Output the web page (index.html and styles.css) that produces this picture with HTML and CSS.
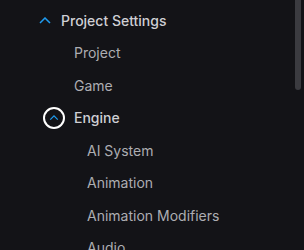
FILE: index.html
```html
<!DOCTYPE html>
<html lang="en">
<head>
    <meta charset="UTF-8">
    <meta name="viewport" content="width=device-width, initial-scale=1.0">
    <title>Settings tree</title>
    <link rel="stylesheet" href="styles.css">
</head>
<body>
    <div class="panel">
        <ul class="tree">
            <li class="row lvl-0 branch">
                <span class="toggle"><svg viewBox="0 0 12 7"><path d="M1 6 L6 1 L11 6"/></svg></span>
                <span class="label">Project Settings</span>
            </li>
            <li class="row lvl-1"><span class="toggle"></span><span class="label">Project</span></li>
            <li class="row lvl-1"><span class="toggle"></span><span class="label">Game</span></li>
            <li class="row lvl-1 branch">
                <span class="toggle focused"><svg viewBox="0 0 12 7"><path d="M1.5 5.5 L6 1 L10.5 5.5"/></svg></span>
                <span class="label">Engine</span>
            </li>
            <li class="row lvl-2"><span class="toggle"></span><span class="label">AI System</span></li>
            <li class="row lvl-2"><span class="toggle"></span><span class="label">Animation</span></li>
            <li class="row lvl-2"><span class="toggle"></span><span class="label">Animation Modifiers</span></li>
            <li class="row lvl-2"><span class="toggle"></span><span class="label">Audio</span></li>
        </ul>
        <div class="scroll-thumb"></div>
    </div>
</body>
</html>
```

FILE: styles.css
```css
html, body {
    margin: 0;
    padding: 0;
    background-color: #131317;
    overflow: hidden;
}
.panel {
    position: relative;
    width: 304px;
    height: 250px;
    overflow: hidden;
    font-family: Inter, "Noto Sans", sans-serif;
    font-size: 14px;
}
.tree {
    list-style: none;
    margin: 0;
    padding: 3.75px 0 0 0;
}
.row {
    display: flex;
    align-items: center;
    height: 32.5px;
    color: #adadb2;
}
.lvl-0 { padding-left: 34px; }
.lvl-1 { padding-left: 47px; }
.lvl-2 { padding-left: 60px; }
.toggle {
    display: flex;
    align-items: center;
    justify-content: center;
    flex: 0 0 22px;
    height: 22px;
    box-sizing: border-box;
}
.toggle svg {
    width: 12px;
    height: 7px;
    fill: none;
    stroke: #1f9cf0;
    stroke-width: 1.5;
}
.toggle.focused {
    border: 2px solid #ffffff;
    border-radius: 50%;
    margin-left: -4.5px;
    margin-right: 4.5px;
}
.toggle.focused svg {
    width: 10px;
    height: 6px;
}
.label {
    margin-left: 5px;
    white-space: nowrap;
}
.branch .label {
    color: #cfcfd4;
    font-weight: 500;
}
.scroll-thumb {
    position: absolute;
    top: -4px;
    left: 295px;
    width: 6px;
    height: 94px;
    border-radius: 3px;
    background-color: #3b3b40;
}
```
